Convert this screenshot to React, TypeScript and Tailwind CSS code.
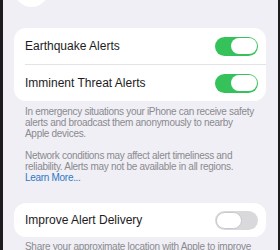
import React from 'react';

function Toggle({ on }: { on: boolean }) {
  return on ? (
    <div className="w-[43px] h-[19px] rounded-full bg-[#35c25a] flex items-center justify-end px-[1.5px]">
      <div className="w-[26px] h-[16px] rounded-full bg-white" />
    </div>
  ) : (
    <div className="w-[43px] h-[19px] rounded-full bg-[#d9d9dc] flex items-center justify-start px-[1px]">
      <div className="w-[26px] h-[17px] rounded-full bg-white border border-[#c8c8cc]" />
    </div>
  );
}

export default function App() {
  return (
    <div className="w-[280px] h-[250px] overflow-hidden bg-[#f0eff5] border-l-[3px] border-r-[2px] border-[#1c1c1e] font-['Liberation_Sans',sans-serif]">
      {/* back button, mostly scrolled off */}
      <div className="w-[35px] h-[35px] -mt-[28px] ml-[11px] rounded-full bg-white" />

      <div className="mt-[21px] ml-[11px] w-[252px] rounded-[12px] bg-white">
        <div className="h-[36px] flex items-center justify-between pl-[11px] pr-[8px]">
          <span className="text-[12px] text-[#1c1c1e]">Earthquake Alerts</span>
          <Toggle on />
        </div>
        <div className="ml-[11px] h-px bg-[#e3e3e6]" />
        <div className="h-[36px] flex items-center justify-between pl-[11px] pr-[8px]">
          <span className="text-[12px] text-[#1c1c1e]">Imminent Threat Alerts</span>
          <Toggle on />
        </div>
      </div>

      <div className="mt-[5px] pl-[22px] text-[10px] leading-[11px] tracking-[-0.3px] text-[#8a8a8e] whitespace-nowrap">
        <p>
          In emergency situations your iPhone can receive safety
          <br />
          alerts and broadcast them anonymously to nearby
          <br />
          Apple devices.
        </p>
        <p className="mt-[11px]">
          Network conditions may affect alert timeliness and
          <br />
          reliability. Alerts may not be available in all regions.
          <br />
          <span className="text-[#2f78c4]">Learn More...</span>
        </p>
      </div>

      <div className="mt-[20px] ml-[11px] w-[252px] h-[34px] rounded-[12px] bg-white flex items-center justify-between pl-[11px] pr-[8px]">
        <span className="text-[12px] text-[#1c1c1e]">Improve Alert Delivery</span>
        <Toggle on={false} />
      </div>

      <p className="mt-[4px] pl-[22px] text-[10px] leading-[11px] tracking-[-0.3px] text-[#8a8a8e] whitespace-nowrap">
        Share your approximate location with Apple to improve
      </p>
    </div>
  );
}
